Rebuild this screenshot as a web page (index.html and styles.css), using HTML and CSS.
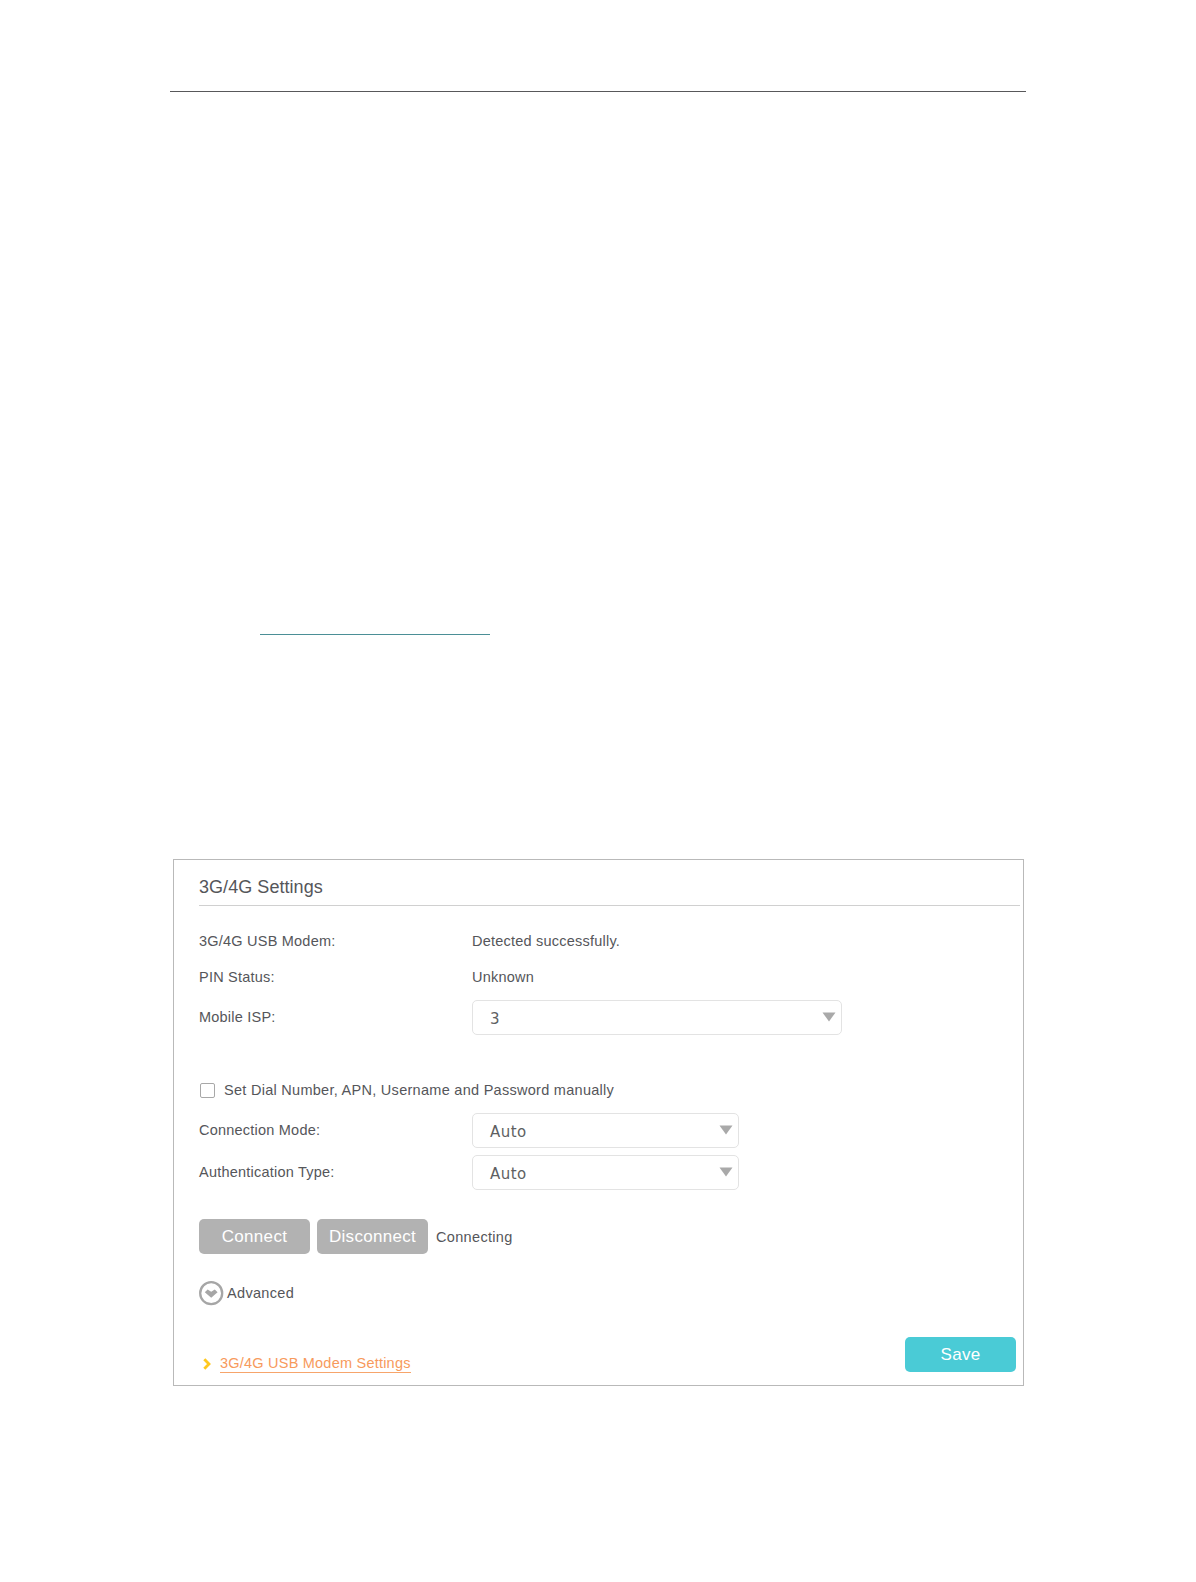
FILE: index.html
```html
<!DOCTYPE html>
<html lang="en">
<head>
    <meta charset="UTF-8">
    <meta name="viewport" content="width=device-width, initial-scale=1.0">
    <title>3G/4G Settings</title>
    <link rel="stylesheet" href="styles.css">
</head>
<body>
    <div class="page-rule"></div>
    <div class="link-rule"></div>

    <div class="panel">
        <h2>3G/4G Settings</h2>
        <form>
            <div class="row">
                <span class="label">3G/4G USB Modem:</span>
                <span>Detected successfully.</span>
            </div>
            <div class="row">
                <span class="label">PIN Status:</span>
                <span>Unknown</span>
            </div>
            <div class="row isp">
                <span class="label">Mobile ISP:</span>
                <div class="select wide">
                    <span>3</span>
                    <svg class="arrow" width="14" height="10" viewBox="0 0 14 10"><path d="M0.5 0.5h13L7 9.5z"/></svg>
                </div>
            </div>
            <label class="row manual">
                <input type="checkbox">
                <span>Set Dial Number, APN, Username and Password manually</span>
            </label>
            <div class="row mode">
                <span class="label">Connection Mode:</span>
                <div class="select">
                    <span>Auto</span>
                    <svg class="arrow" width="14" height="10" viewBox="0 0 14 10"><path d="M0.5 0.5h13L7 9.5z"/></svg>
                </div>
            </div>
            <div class="row mode">
                <span class="label">Authentication Type:</span>
                <div class="select">
                    <span>Auto</span>
                    <svg class="arrow" width="14" height="10" viewBox="0 0 14 10"><path d="M0.5 0.5h13L7 9.5z"/></svg>
                </div>
            </div>
            <div class="buttons">
                <button type="button">Connect</button>
                <button type="button">Disconnect</button>
                <span>Connecting</span>
            </div>
            <div class="advanced">
                <svg width="25" height="25" viewBox="0 0 25 25">
                    <circle cx="12.2" cy="12.2" r="11" fill="none" stroke="#a6a6a6" stroke-width="2.3"/>
                    <path d="M5.8 11.2L8.6 8.6 12.2 10.8 15.8 8.6 18.6 11.2 12.2 16.8z" fill="#a6a6a6"/>
                </svg>
                <span>Advanced</span>
            </div>
            <div class="footer">
                <svg width="8" height="12" viewBox="0 0 8 12"><path d="M1.3 1.2L6 6 1.3 10.8" fill="none" stroke="#ffc81e" stroke-width="2.8"/></svg>
                <a href="#">3G/4G USB Modem Settings</a>
                <button type="button" class="save">Save</button>
            </div>
        </form>
    </div>
</body>
</html>
```

FILE: styles.css
```css
body {
    font-family: "Liberation Sans", Arial, sans-serif;
    font-size: 14.5px;
    letter-spacing: 0.22px;
    color: #55565a;
    background: #fff;
    margin: 0;
    padding: 91px 170px 0;
}

.page-rule {
    height: 1px;
    background: #58585a;
}

.link-rule {
    width: 230px;
    height: 1px;
    margin: 542px 0 224px 90px;
    background: #4b8f96;
}

.panel {
    box-sizing: border-box;
    width: 851px;
    height: 527px;
    margin-left: 3px;
    padding: 0 3px 0 25px;
    border: 1px solid #b9b9b9;
}

h2 {
    margin: 0 0 17px;
    height: 45px;
    line-height: 55px;
    border-bottom: 1px solid #d0d0d0;
    font-size: 18px;
    font-weight: normal;
    letter-spacing: 0.05px;
}

.row {
    display: flex;
    align-items: center;
    height: 36px;
}

.label {
    width: 273px;
}

.row.isp {
    height: 45px;
}

.row.isp .label {
    padding-bottom: 1px;
}

.row.manual {
    height: 34px;
    margin: 33px 0 2px;
    letter-spacing: 0.28px;
}

.row.mode {
    height: 42px;
}

.select {
    box-sizing: border-box;
    display: flex;
    align-items: center;
    justify-content: space-between;
    width: 267px;
    height: 35px;
    padding: 0 5px 0 17px;
    border: 1px solid #e3e3e3;
    border-radius: 5px;
    font-family: "DejaVu Sans", Verdana, sans-serif;
    font-size: 15px;
    letter-spacing: 0.45px;
    color: #5e5f62;
}

.select.wide {
    width: 370px;
}

.select span {
    padding-top: 3px;
}

.arrow {
    margin-bottom: 1px;
    fill: #a9a9a9;
}

input {
    appearance: none;
    box-sizing: border-box;
    width: 15px;
    height: 15px;
    margin: 1px 9px 0 1px;
    border: 1.5px solid #a8a8a8;
    border-radius: 2px;
}

.buttons {
    display: flex;
    align-items: center;
    margin-top: 26px;
}

button {
    width: 111px;
    height: 35px;
    margin-right: 7px;
    padding: 0;
    border: none;
    border-radius: 5px;
    background: #b2b2b2;
    color: #fff;
    font-family: inherit;
    font-size: 17px;
    letter-spacing: 0.3px;
}

.buttons span {
    padding: 1px 0 0 1px;
    letter-spacing: 0.33px;
}

.advanced {
    display: flex;
    align-items: center;
    gap: 3px;
    height: 25px;
    margin-top: 27px;
}

.advanced span {
    padding-bottom: 2px;
    letter-spacing: 0.33px;
}

.footer {
    display: flex;
    align-items: center;
    height: 35px;
    margin-top: 31px;
    padding-left: 4px;
}

.footer svg {
    margin-top: 18px;
}

.footer a {
    margin: 17px 0 0 9px;
    border-bottom: 1px solid #f7a56b;
    line-height: 18px;
    color: #f79a5c;
    text-decoration: none;
}

.save {
    margin: 0 4px 0 auto;
    background: #4acbd6;
}
```
